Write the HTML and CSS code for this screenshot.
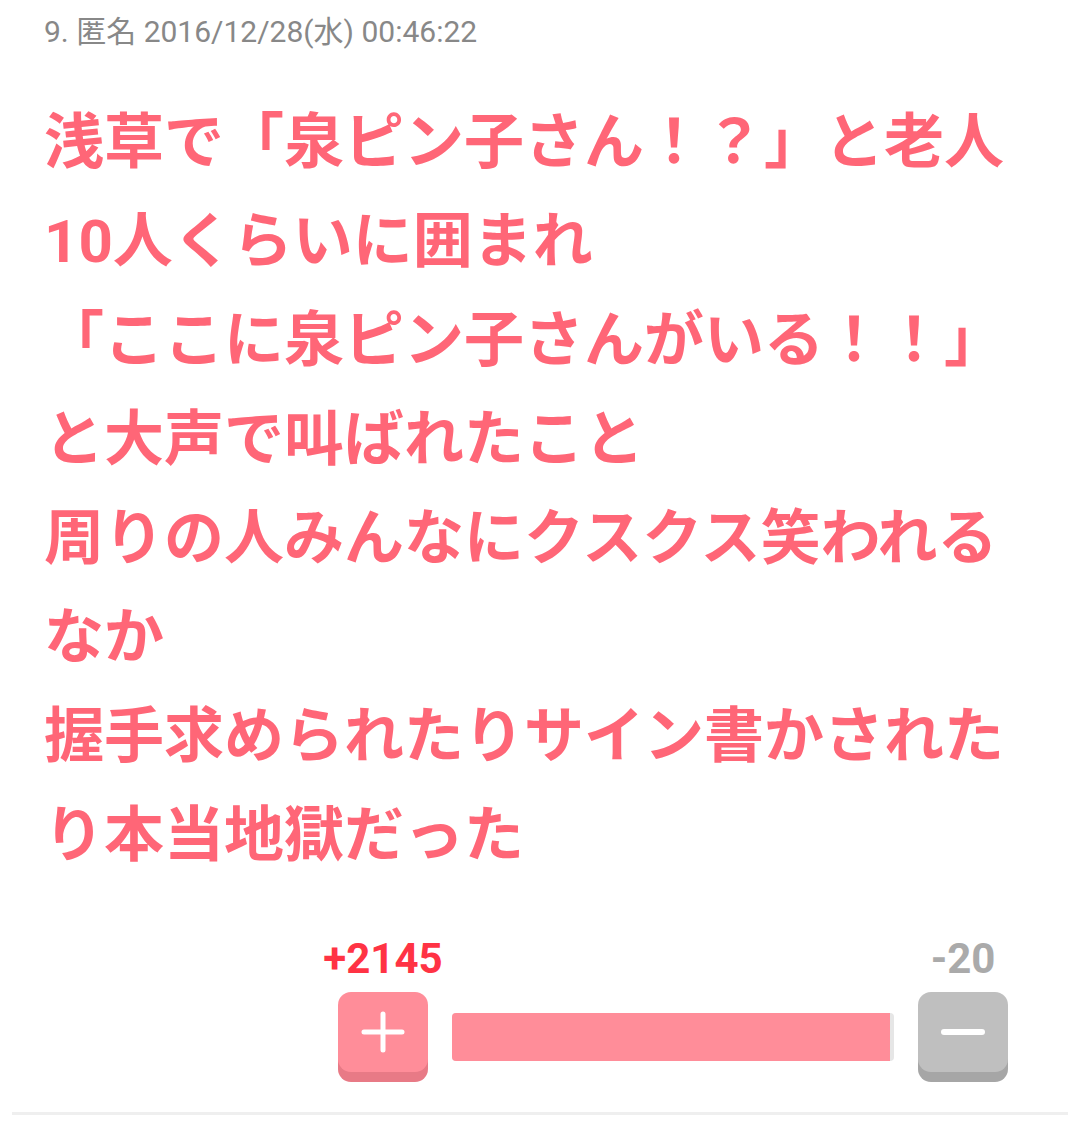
FILE: index.html
```html
<!DOCTYPE html>
<html lang="ja">
<head>
<meta charset="utf-8">
<title>コメント 9</title>
<meta name="viewport" content="width=device-width,initial-scale=1">
<link rel="stylesheet" href="styles.css">
</head>
<body>
<div class="comment">
  <div class="comment-head">9. 匿名 2016/12/28(水) 00:46:22</div>

  <div class="comment-body">
    浅草で「泉ピン子さん！？」と老人<br>
    10人くらいに囲まれ<br>
    「ここに泉ピン子さんがいる！！」<br>
    と大声で叫ばれたこと<br>
    周りの人みんなにクスクス笑われる<br>
    なか<br>
    握手求められたりサイン書かされた<br>
    り本当地獄だった
  </div>

  <!-- 投票 -->
  <div class="vote">
    <div class="vote-side">
      <span class="count plus">+2145</span>
      <button class="vbtn vbtn-plus" aria-label="プラス">
        <svg width="44" height="42" viewBox="0 0 44 42"><path d="M22 3v36M3 21h38" stroke="#fff" stroke-width="5" stroke-linecap="round" fill="none"/></svg>
      </button>
    </div>
    <div class="bar"><div class="bar-fill" style="width:99.1%"></div></div>
    <div class="vote-side">
      <span class="count minus">-20</span>
      <button class="vbtn vbtn-minus" aria-label="マイナス">
        <svg width="44" height="8" viewBox="0 0 44 8"><path d="M3 4h38" stroke="#fff" stroke-width="6" stroke-linecap="round" fill="none"/></svg>
      </button>
    </div>
  </div>

  <div class="divider"></div>
</div>
</body>
</html>
```

FILE: styles.css
```css
:root { --pink:#ff6677; --btn:#ff8d99; --btn-dk:#e87a86; --gray:#bfbfbf; --gray-dk:#a6a6a6 }
body { margin:0; background:#fff; font-family:Roboto,"Noto Sans CJK JP",sans-serif }
.comment { padding:12px 12px 0 }
.comment-head { padding-left:32px; font-size:30px; line-height:40px; color:#888 }
.comment-body { padding:41px 0 0 32px; font-size:60px; line-height:99px; font-weight:700; color:var(--pink); white-space:nowrap }
.vote { display:flex; align-items:flex-end; gap:24px; justify-content:flex-end; padding-right:60px; margin-top:49px }
.vote-side { display:flex; flex-direction:column; align-items:center; width:90px }
.count { font-size:42px; font-weight:700; line-height:50px; margin-bottom:8px }
.count.plus { color:#ff3344 }
.count.minus { color:#aaa }
.vbtn { width:90px; height:80px; margin-bottom:10px; border:0; border-radius:13px; padding:0; display:flex; align-items:center; justify-content:center; cursor:pointer }
.vbtn-plus { background:var(--btn); box-shadow:0 10px 0 var(--btn-dk) }
.vbtn-minus { background:var(--gray); box-shadow:0 10px 0 var(--gray-dk) }
.bar { width:442px; height:48px; margin-bottom:21px; background:#e6e6e6; border-radius:4px; overflow:hidden }
.bar-fill { height:100%; background:var(--btn) }
.divider { margin-top:30px; height:3px; background:#efefef }
```
